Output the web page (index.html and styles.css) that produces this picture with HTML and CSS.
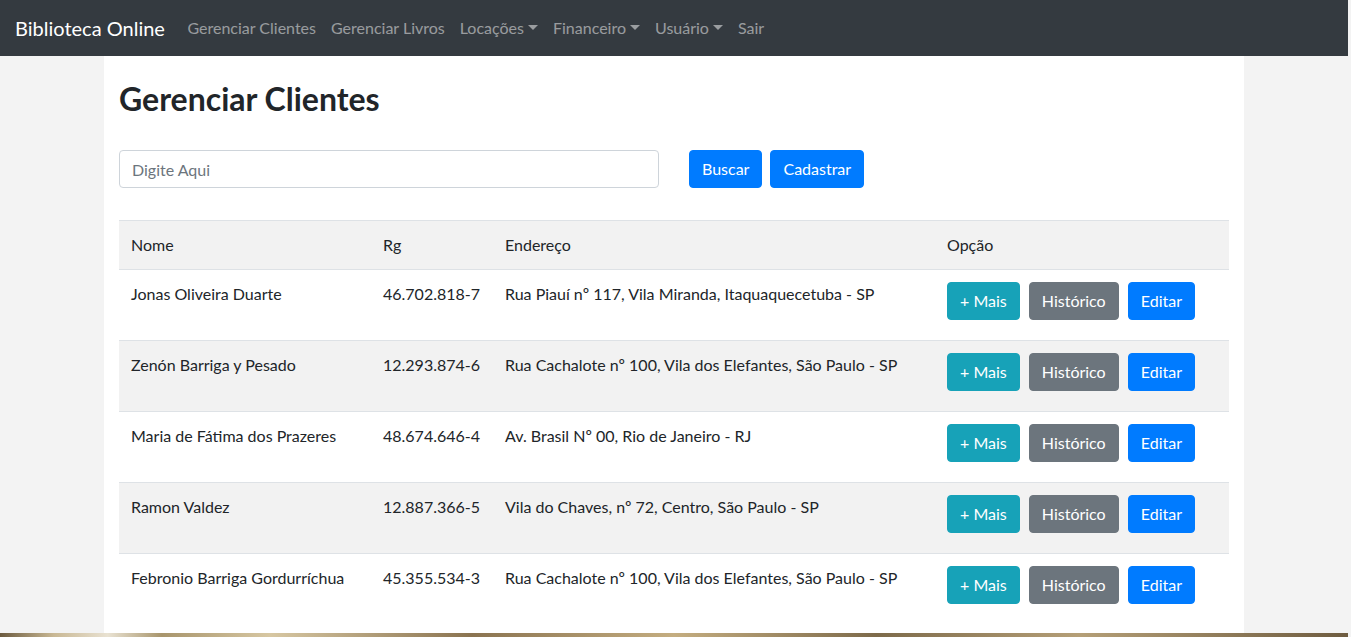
FILE: index.html
```html
<!DOCTYPE html>
<html lang="pt-BR">
<head>
<meta charset="utf-8">
<title>Gerenciar Clientes</title>
<link rel="stylesheet" href="styles.css">
</head>
<body>
<nav class="navbar">
  <a class="brand" href="#">Biblioteca Online</a>
  <ul class="nav">
    <li><a href="#">Gerenciar Clientes</a></li>
    <li><a href="#">Gerenciar Livros</a></li>
    <li><a href="#" class="dropdown">Locações</a></li>
    <li><a href="#" class="dropdown">Financeiro</a></li>
    <li><a href="#" class="dropdown">Usuário</a></li>
    <li><a href="#">Sair</a></li>
  </ul>
</nav>
<main class="container">
  <h1 class="title">Gerenciar Clientes</h1>
  <form class="search-row">
    <div class="search-col"><input class="form-control" type="text" placeholder="Digite Aqui"></div>
    <div class="actions-col">
      <button type="button" class="btn btn-primary">Buscar</button>
      <button type="button" class="btn btn-primary">Cadastrar</button>
    </div>
  </form>
  <table class="table">
    <thead>
      <tr><th class="c-nome">Nome</th><th class="c-rg">Rg</th><th class="c-end">Endereço</th><th class="c-op">Opção</th></tr>
    </thead>
    <tbody>
      <tr><td>Jonas Oliveira Duarte</td><td>46.702.818-7</td><td>Rua Piauí nº 117, Vila Miranda, Itaquaquecetuba - SP</td><td class="ops"><button class="btn btn-info">+ Mais</button> <button class="btn btn-secondary">Histórico</button> <button class="btn btn-primary">Editar</button></td></tr>
      <tr><td>Zenón Barriga y Pesado</td><td>12.293.874-6</td><td>Rua Cachalote nº 100, Vila dos Elefantes, São Paulo - SP</td><td class="ops"><button class="btn btn-info">+ Mais</button> <button class="btn btn-secondary">Histórico</button> <button class="btn btn-primary">Editar</button></td></tr>
      <tr><td>Maria de Fátima dos Prazeres</td><td>48.674.646-4</td><td>Av. Brasil Nº 00, Rio de Janeiro - RJ</td><td class="ops"><button class="btn btn-info">+ Mais</button> <button class="btn btn-secondary">Histórico</button> <button class="btn btn-primary">Editar</button></td></tr>
      <tr><td>Ramon Valdez</td><td>12.887.366-5</td><td>Vila do Chaves, nº 72, Centro, São Paulo - SP</td><td class="ops"><button class="btn btn-info">+ Mais</button> <button class="btn btn-secondary">Histórico</button> <button class="btn btn-primary">Editar</button></td></tr>
      <tr><td>Febronio Barriga Gordurríchua</td><td>45.355.534-3</td><td>Rua Cachalote nº 100, Vila dos Elefantes, São Paulo - SP</td><td class="ops"><button class="btn btn-info">+ Mais</button> <button class="btn btn-secondary">Histórico</button> <button class="btn btn-primary">Editar</button></td></tr>
    </tbody>
  </table>
</main>
<footer class="footer"></footer>
</body>
</html>
```
FILE: styles.css
```css
* { box-sizing: border-box; }
html, body { margin: 0; }
body {
  background: #f3f3f3;
  font-family: Lato, "Noto Sans", sans-serif;
  font-size: 16px;
  line-height: 1.5;
  color: #212529;
  padding-right: 3px;
}
.navbar {
  background: #343a40;
  height: 56px;
  display: flex;
  align-items: center;
  padding: 0 16px 0 15px;
}
.brand {
  color: #fff;
  font-size: 20px;
  text-decoration: none;
  margin-right: 15px;
  line-height: 30px;
}
.nav {
  display: flex;
  list-style: none;
  margin: 0;
  padding: 0;
}
.nav a {
  display: block;
  padding: 8px 7.5px;
  color: rgba(255,255,255,.5);
  text-decoration: none;
}
.dropdown::after {
  content: "";
  display: inline-block;
  margin-left: 4px;
  vertical-align: 4px;
  border-top: 5px solid;
  border-left: 5px solid transparent;
  border-right: 5px solid transparent;
}
.container {
  width: 1140px;
  margin: 0 auto;
  background: #fff;
  padding: 24px 15px 9px;
}
.title {
  font-size: 32px;
  font-weight: 700;
  line-height: 38px;
  margin: 0 0 32px;
}
.search-row {
  display: flex;
  gap: 30px;
  margin-bottom: 32px;
}
.search-col { width: 540px; }
.actions-col { display: flex; gap: 8px; }
.form-control {
  width: 100%;
  height: 38px;
  padding: 6px 12px;
  font: inherit;
  color: #495057;
  border: 1px solid #ced4da;
  border-radius: 4px;
  background: #fff;
}
.form-control::placeholder { color: #6c757d; }
.btn {
  font: inherit;
  line-height: 24px;
  padding: 6px 12px;
  border: 1px solid transparent;
  border-radius: 4px;
  color: #fff;
  cursor: pointer;
}
.btn-primary { background: #007bff; border-color: #007bff; }
.btn-info { background: #17a2b8; border-color: #17a2b8; }
.btn-secondary { background: #6c757d; border-color: #6c757d; }
.table {
  width: 1110px;
  border-collapse: collapse;
}
.table th, .table td {
  text-align: left;
  vertical-align: top;
  padding: 12px;
  border-top: 1px solid #dee2e6;
  font-weight: 400;
}
.table thead th { background: #f2f2f2; }
.table tbody tr:nth-child(even) td { background: #f2f2f2; }
.c-nome { width: 252px; }
.c-rg { width: 122px; }
.c-end { width: 442px; }
.ops .btn { margin: 0 5px 8px 0; }
.footer {
  height: 40px;
  background: linear-gradient(90deg, #6b5a3e 0%, #c9b894 4%, #e9e2d2 8%, #a8956c 12%, #d7c7a2 20%, #8a7350 35%, #c4ad80 50%, #7d6a4a 65%, #b59f77 80%, #6e5c40 100%);
}
```
